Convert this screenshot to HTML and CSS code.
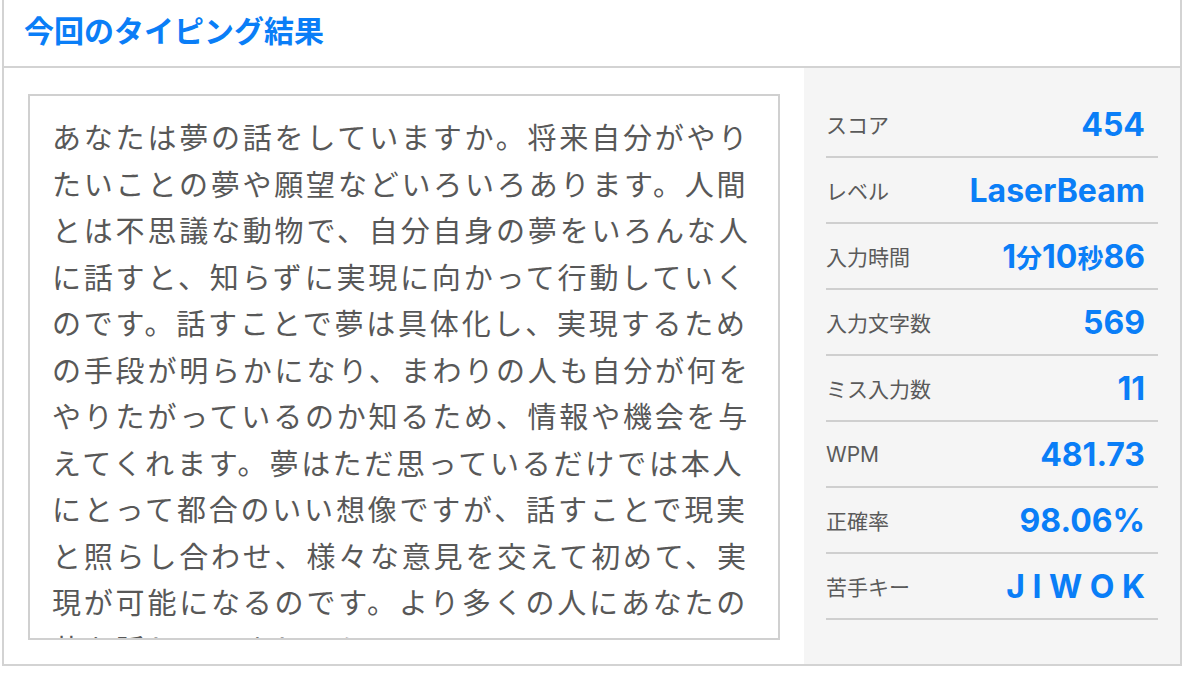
FILE: index.html
```html
<!DOCTYPE html>
<html lang="ja">
<head>
<meta charset="utf-8">
<title>今回のタイピング結果</title>
<link rel="stylesheet" href="styles.css">
</head>
<body>
<section class="result">
  <header class="result-head">
    <h2 class="result-title">今回のタイピング結果</h2>
  </header>
  <div class="result-body">
    <div class="text-pane">
      <div class="typed-text">あなたは夢の話をしていますか。将来自分がやりたいことの夢や願望などいろいろあります。人間とは不思議な動物で、自分自身の夢をいろんな人に話すと、知らずに実現に向かって行動していくのです。話すことで夢は具体化し、実現するための手段が明らかになり、まわりの人も自分が何をやりたがっているのか知るため、情報や機会を与えてくれます。夢はただ思っているだけでは本人にとって都合のいい想像ですが、話すことで現実と照らし合わせ、様々な意見を交えて初めて、実現が可能になるのです。より多くの人にあなたの夢を話してみましょう。</div>
    </div>
    <dl class="stats">
      <div class="stat"><dt>スコア</dt><dd>454</dd></div>
      <div class="stat"><dt>レベル</dt><dd>LaserBeam</dd></div>
      <div class="stat"><dt>入力時間</dt><dd>1<span class="unit">分</span>10<span class="unit">秒</span>86</dd></div>
      <div class="stat"><dt>入力文字数</dt><dd>569</dd></div>
      <div class="stat"><dt>ミス入力数</dt><dd>11</dd></div>
      <div class="stat"><dt>WPM</dt><dd>481.73</dd></div>
      <div class="stat"><dt>正確率</dt><dd>98.06%</dd></div>
      <div class="stat"><dt>苦手キー</dt><dd class="keys">J I W O K</dd></div>
    </dl>
  </div>
</section>
</body>
</html>
```

FILE: styles.css
```css
html, body {
  margin: 0;
  padding: 0;
  background: #ffffff;
}

body {
  font-family: "Noto Sans CJK JP", "Noto Sans", sans-serif;
}

.result {
  margin-left: 2px;
  width: 1180px;
  box-sizing: border-box;
  border: 2px solid #d3d3d3;
  border-top: none;
}

.result-head {
  height: 68px;
  box-sizing: border-box;
  border-bottom: 2px solid #d3d3d3;
  padding: 8px 0 0 20px;
}

.result-title {
  margin: 0;
  font-size: 30px;
  line-height: 43px;
  font-weight: 700;
  color: #0a7ef7;
}

.result-body {
  display: flex;
}

.text-pane {
  flex: 1;
  padding: 26px 24px 24px;
}

.typed-text {
  height: 546px;
  box-sizing: border-box;
  border: 2px solid #d0d0d0;
  padding: 17px 22px 0;
  overflow: hidden;
  font-size: 29px;
  line-height: 46.5px;
  letter-spacing: 2.8px;
  color: #585858;
}

.stats {
  width: 376px;
  margin: 0;
  padding: 24px 22px 0;
  box-sizing: border-box;
  background: #f5f5f5;
}

.stat {
  height: 66px;
  box-sizing: border-box;
  border-bottom: 2px solid #cfcfcf;
  display: flex;
  align-items: center;
  justify-content: space-between;
}

.stat dt {
  font-family: Inter, "Noto Sans CJK JP", sans-serif;
  font-size: 21px;
  color: #5a5a5a;
}

.stat dd {
  margin: 0;
  padding-right: 13px;
  font-family: Inter, "Noto Sans CJK JP", sans-serif;
  font-size: 32px;
  font-weight: 700;
  color: #0a7ef7;
}

.stat .unit {
  font-family: "Noto Sans CJK JP", sans-serif;
  font-size: 26px;
}

.stat .keys {
  word-spacing: 0;
}
```
